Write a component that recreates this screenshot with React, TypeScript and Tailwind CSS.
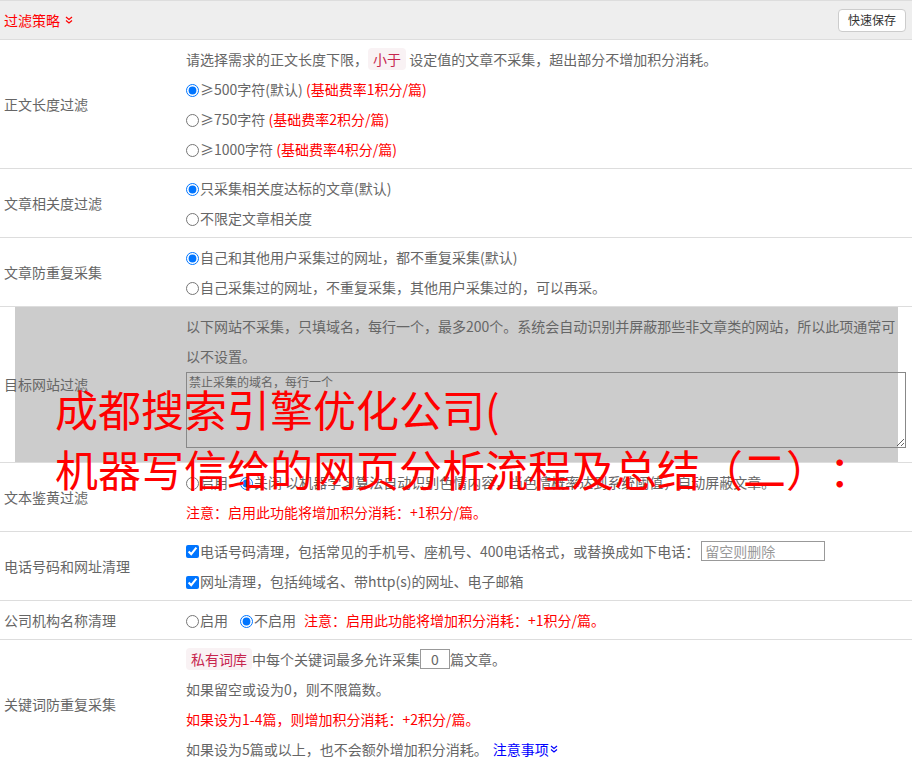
import React from 'react';

const DoubleChevron: React.FC<{ className?: string }> = ({ className }) => (
  <svg viewBox="0 0 8 8" className={className} fill="none" stroke="currentColor" strokeWidth="1.2">
    <polyline points="1,1 4,3.5 7,1" />
    <polyline points="1,4.5 4,7 7,4.5" />
  </svg>
);

const Tag: React.FC<{ children: React.ReactNode }> = ({ children }) => (
  <span className="bg-[#f9f2f4] text-[#c7254e] rounded-[4px] px-[5px] py-[2px] leading-[18px] inline-block">{children}</span>
);

const Radio: React.FC<{ checked?: boolean; name: string }> = ({ checked, name }) => (
  <input type="radio" name={name} defaultChecked={checked} className="m-0 mr-px align-[-2px] w-[13px] h-[13px]" />
);

const Check: React.FC = () => (
  <input type="checkbox" defaultChecked className="m-0 mr-px align-[-2px] w-[13px] h-[13px]" />
);

const Row: React.FC<{ label: string; children: React.ReactNode; extra?: React.ReactNode }> = ({ label, children, extra }) => (
  <div className="relative grid grid-cols-[182px_1fr] border-b border-[#ddd]">
    {extra}
    <div className="relative z-10 flex items-center pl-1">{label}</div>
    <div className="relative z-10 py-1 pl-1 leading-[30px]">{children}</div>
  </div>
);

export default function App() {
  return (
    <div className="w-[912px] bg-white text-[14px] text-[#666] [text-spacing-trim:space-all] font-['Noto_Sans_CJK_SC','Liberation_Sans',sans-serif]">
      {/* header */}
      <div className="h-[40px] flex items-center justify-between bg-[#eee] border-y border-[#ddd] pl-1 pr-[6px]">
        <div className="flex items-center text-[#f00]">
          过滤策略
          <DoubleChevron className="w-[8px] h-[8px] ml-[5px]" />
        </div>
        <button className="h-[23px] px-[9px] bg-white border border-[#ccc] rounded-[4px] text-[12px] text-[#333]">快速保存</button>
      </div>

      <Row label="正文长度过滤">
        <div>请选择需求的正文长度下限，<Tag>小于</Tag> 设定值的文章不采集，超出部分不增加积分消耗。</div>
        <div><Radio name="len" checked />≥500字符(默认) <span className="text-[#f00]">(基础费率1积分/篇)</span></div>
        <div><Radio name="len" />≥750字符 <span className="text-[#f00]">(基础费率2积分/篇)</span></div>
        <div><Radio name="len" />≥1000字符 <span className="text-[#f00]">(基础费率4积分/篇)</span></div>
      </Row>

      <Row label="文章相关度过滤">
        <div><Radio name="rel" checked />只采集相关度达标的文章(默认)</div>
        <div><Radio name="rel" />不限定文章相关度</div>
      </Row>

      <Row label="文章防重复采集">
        <div><Radio name="dup" checked />自己和其他用户采集过的网址，都不重复采集(默认)</div>
        <div><Radio name="dup" />自己采集过的网址，不重复采集，其他用户采集过的，可以再采。</div>
      </Row>

      <Row
        label="目标网站过滤"
        extra={
          <>
            <div className="absolute z-0 left-[15px] top-0 w-[883px] h-[155px] bg-[#ccc]" />
            <div className="absolute z-20 left-[55px] top-[71px] text-[43px] leading-[60px] text-[#f00] whitespace-nowrap pointer-events-none">
              <div>成都搜索引擎优化公司(</div>
              <div>机器写信给的网页分析流程及总结（二）：</div>
            </div>
          </>
        }
      >
        <div>以下网站不采集，只填域名，每行一个，最多200个。系统会自动识别并屏蔽那些非文章类的网站，所以此项通常可</div>
        <div>以不设置。</div>
        <textarea
          placeholder="禁止采集的域名，每行一个"
          className="block w-[720px] h-[76px] mt-px mb-[10px] border border-[#888] bg-transparent px-[2px] py-[1px] text-[12px] leading-[16px] placeholder:text-[#666] resize-y"
        />
      </Row>

      <Row label="文本鉴黄过滤">
        <div>
          <Radio name="porn" />启用<span className="inline-block w-[12px]" />
          <Radio name="porn" checked />关闭 以机器学习算法自动识别色情内容，当色情概率达到系统阈值，自动屏蔽文章。
        </div>
        <div className="text-[#f00]">注意：启用此功能将增加积分消耗：+1积分/篇。</div>
      </Row>

      <Row label="电话号码和网址清理">
        <div className="flex items-center">
          <Check />电话号码清理，包括常见的手机号、座机号、400电话格式，或替换成如下电话：
          <input
            placeholder="留空则删除"
            className="ml-[2px] w-[124px] h-[20px] border border-[#999] px-[3px] text-[14px] leading-[18px] placeholder:text-[#999]"
          />
        </div>
        <div><Check />网址清理，包括纯域名、带http(s)的网址、电子邮箱</div>
      </Row>

      <Row label="公司机构名称清理">
        <div>
          <Radio name="org" />启用<span className="inline-block w-[12px]" />
          <Radio name="org" checked />不启用<span className="inline-block w-[8px]" />
          <span className="text-[#f00]">注意：启用此功能将增加积分消耗：+1积分/篇。</span>
        </div>
      </Row>

      <Row label="关键词防重复采集">
        <div className="flex items-center">
          <Tag>私有词库</Tag>中每个关键词最多允许采集
          <input defaultValue="0" className="w-[30px] h-[20px] border border-[#999] text-center text-[14px] leading-[18px] text-[#666]" />
          篇文章。
        </div>
        <div>如果留空或设为0，则不限篇数。</div>
        <div className="text-[#f00]">如果设为1-4篇，则增加积分消耗：+2积分/篇。</div>
        <div className="flex items-center">
          如果设为5篇或以上，也不会额外增加积分消耗。
          <span className="ml-[5px] text-[#00f] flex items-center">
            注意事项
            <DoubleChevron className="w-[8px] h-[8px] ml-px" />
          </span>
        </div>
      </Row>
    </div>
  );
}
